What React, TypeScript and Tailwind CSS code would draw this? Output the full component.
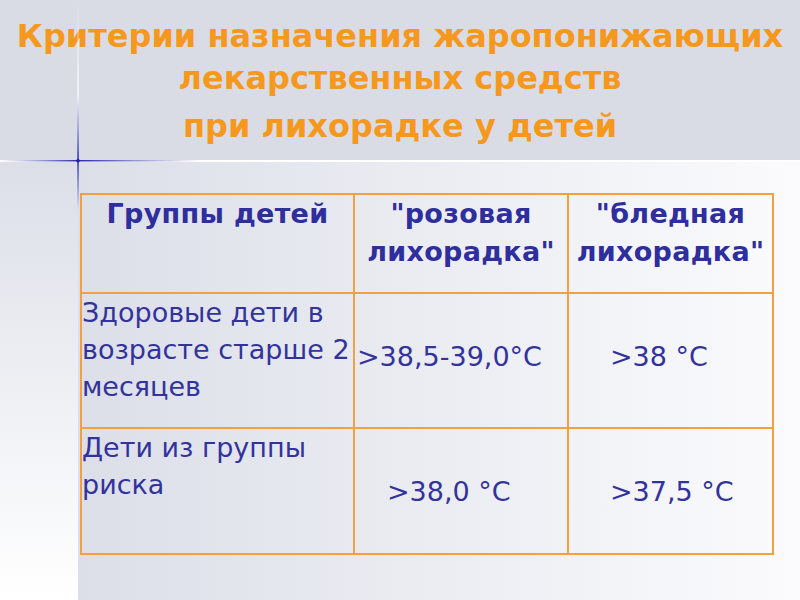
import React from 'react';

const Sparkle = () => (
  <svg className="absolute left-0 top-0 pointer-events-none" width="200" height="210" viewBox="0 0 200 210">
    <defs>
      <linearGradient id="h" x1="0" y1="0" x2="1" y2="0">
        <stop offset="0" stopColor="#ffffff" stopOpacity="0.8" />
        <stop offset="0.39" stopColor="#2a2aa8" />
        <stop offset="1" stopColor="#ffffff" stopOpacity="0.9" />
      </linearGradient>
      <linearGradient id="v" x1="0" y1="0" x2="0" y2="1">
        <stop offset="0" stopColor="#ffffff" stopOpacity="0" />
        <stop offset="0.45" stopColor="#ffffff" stopOpacity="0.9" />
        <stop offset="0.76" stopColor="#2a2aa8" />
        <stop offset="1" stopColor="#2a2aa8" stopOpacity="0" />
      </linearGradient>
    </defs>
    <rect x="0" y="160" width="200" height="1.5" fill="url(#h)" />
    <rect x="77.3" y="0" width="1.5" height="210" fill="url(#v)" />
    <circle cx="78" cy="160.7" r="1.8" fill="#2020a0" />
  </svg>
);

export default function App() {
  const title = "font-['DejaVu_Sans',sans-serif] font-bold text-[#f6981e] text-[32px] leading-[42px]";
  const cell = "border-2 border-[#f2a040] p-0";
  const head = "font-['DejaVu_Sans',sans-serif] font-bold text-[27px] leading-[38px] tracking-[0.3px] text-[#2e2e9c]";
  const body = "font-['DejaVu_Sans',sans-serif] text-[27px] leading-[37px] text-[#33339c] whitespace-nowrap";

  return (
    <div className="relative w-[800px] h-[600px] overflow-hidden flex flex-col bg-white">
      {/* Title band */}
      <div className="h-[160px] bg-[#d9dce4] flex flex-col items-center pt-[15px]">
        <h1 className={title}>Критерии назначения жаропонижающих</h1>
        <p className={title}>лекарственных средств</p>
        <p className={`${title} mt-[6px]`}>при лихорадке у детей</p>
      </div>
      <div className="h-[2px] bg-white" />

      {/* Lower part */}
      <div className="flex-1 flex">
        <div className="w-[78px] bg-gradient-to-b from-[#dcdfe8] to-white" />
        <div className="flex-1 bg-gradient-to-r from-[#dcdfe8] to-[#fbfbfd] pt-[31px] pl-[2px]">
          <table className="border-collapse w-[694px] table-fixed">
            <tbody>
              <tr className="h-[99px]">
                <td className={`${cell} w-[273px] align-top text-center ${head}`}>Группы детей</td>
                <td className={`${cell} w-[214px] align-top text-center ${head}`}>"розовая<br />лихорадка"</td>
                <td className={`${cell} align-top text-center ${head}`}>"бледная<br />лихорадка"</td>
              </tr>
              <tr className="h-[135px]">
                <td className={`${cell} align-top ${body}`}>Здоровые дети в<br />возрасте старше 2<br />месяцев</td>
                <td className={`${cell} align-middle pl-[2px] pb-[8px] ${body}`}>&gt;38,5-39,0°С</td>
                <td className={`${cell} align-middle pl-[41px] pb-[8px] ${body}`}>&gt;38 °С</td>
              </tr>
              <tr className="h-[126px]">
                <td className={`${cell} align-top ${body}`}>Дети из группы<br />риска</td>
                <td className={`${cell} align-middle pl-[32px] ${body}`}>&gt;38,0 °С</td>
                <td className={`${cell} align-middle pl-[41px] ${body}`}>&gt;37,5 °С</td>
              </tr>
            </tbody>
          </table>
        </div>
      </div>
      <Sparkle />
    </div>
  );
}
